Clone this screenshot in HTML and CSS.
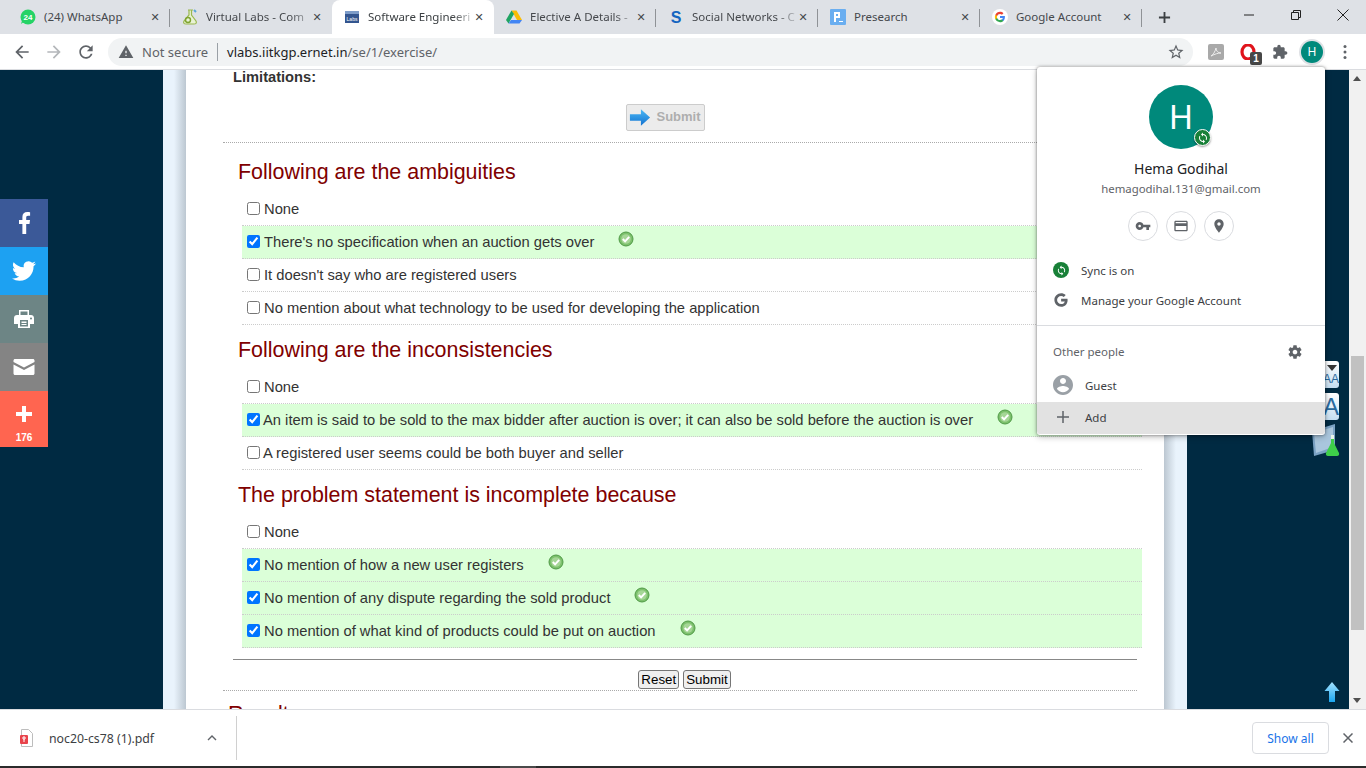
FILE: index.html
```html
<!DOCTYPE html>
<html lang="en">
<head>
  <meta charset="UTF-8" />
  <title>Software Engineering</title>
  <link rel="stylesheet" href="styles.css">
</head>
<body>
  <div class="tabstrip">
    <div class="tab sep">
      <svg class="fav" viewBox="0 0 16 16"><circle cx="8" cy="8" r="7.5" fill="#25d366"/><path d="M1 15l1.2-4h4z" fill="#25d366"/><text x="8" y="11" class="fav-num">24</text></svg>
      <span class="tab-title">(24) WhatsApp</span><span class="tab-x">✕</span>
    </div>
    <div class="tab">
      <svg class="fav" viewBox="0 0 16 16"><path d="M6 1h5M7 1v5L2 12c-1 2 0 3 2 3h8c2 0 3-1 2-3L9.5 6V1" fill="#e9f3d5" stroke="#9ab84f" stroke-width="1.2"/><circle cx="6" cy="11" r="2.5" fill="none" stroke="#7fa331" stroke-width="1.4"/><path d="M12 1l2 2" stroke="#5aa7d8" stroke-width="2"/></svg>
      <span class="tab-title fade">Virtual Labs - Com</span><span class="tab-x">✕</span>
    </div>
    <div class="tab active">
      <svg class="fav" viewBox="0 0 16 16"><rect x="1" y="2" width="14" height="12" fill="#33558f"/><rect x="1" y="2" width="14" height="3" fill="#7d9cc9"/><text x="8" y="11.5" class="fav-labs">Labs</text></svg>
      <span class="tab-title fade">Software Engineeri</span><span class="tab-x">✕</span>
    </div>
    <div class="tab sep">
      <svg class="fav" viewBox="0 0 16 16"><path d="M5.5 1.5h5L16 11h-5z" fill="#fbbc04"/><path d="M5.5 1.5L0 11l2.5 3.5L8 5z" fill="#1fa463"/><path d="M2.5 14.5h11L16 11H5z" fill="#4285f4"/></svg>
      <span class="tab-title fade">Elective A Details -</span><span class="tab-x">✕</span>
    </div>
    <div class="tab sep">
      <svg class="fav" viewBox="0 0 16 16"><text x="8" y="14" class="fav-s">S</text></svg>
      <span class="tab-title fade">Social Networks - C</span><span class="tab-x">✕</span>
    </div>
    <div class="tab sep">
      <svg class="fav" viewBox="0 0 16 16"><rect width="16" height="16" rx="1" fill="#6aaef0"/><path d="M4 3h6v6H6v4H4zM6 5v2h2V5zM9 12h4v1H9z" fill="#fff"/></svg>
      <span class="tab-title">Presearch</span><span class="tab-x">✕</span>
    </div>
    <div class="tab sep">
      <svg class="fav" viewBox="0 0 24 24"><circle cx="12" cy="12" r="12" fill="#fff"/><g transform="translate(3.6 3.6) scale(.7)"><path fill="#4285F4" d="M22.56 12.25c0-.78-.07-1.53-.2-2.25H12v4.26h5.92c-.26 1.37-1.04 2.53-2.21 3.31v2.77h3.57c2.08-1.92 3.28-4.74 3.28-8.09z"/><path fill="#34A853" d="M12 23c2.97 0 5.46-.98 7.28-2.66l-3.57-2.77c-.98.66-2.23 1.06-3.71 1.06-2.86 0-5.29-1.93-6.16-4.53H2.18v2.84C3.99 20.53 7.7 23 12 23z"/><path fill="#FBBC05" d="M5.84 14.09c-.22-.66-.35-1.36-.35-2.09s.13-1.43.35-2.09V7.07H2.18C1.43 8.55 1 10.22 1 12s.43 3.45 1.18 4.93l3.66-2.84z"/><path fill="#EA4335" d="M12 5.38c1.62 0 3.06.56 4.21 1.64l3.15-3.15C17.45 2.09 14.97 1 12 1 7.7 1 3.99 3.47 2.18 7.07l3.66 2.84c.87-2.6 3.3-4.53 6.16-4.53z"/></g></svg>
      <span class="tab-title">Google Account</span><span class="tab-x">✕</span>
    </div>
    <svg class="newtab" viewBox="0 0 14 14"><path d="M6 1h2v5h5v2H8v5H6V8H1V6h5z" fill="#3c4043"/></svg>
    <div class="winctl">
      <svg viewBox="0 0 12 12"><path d="M1 6h10" stroke="#222" fill="none"/></svg>
      <svg viewBox="0 0 12 12"><path d="M1.5 3.5h7v7h-7zM3.5 3.5v-2h7v7h-2" stroke="#222" fill="none"/></svg>
      <svg viewBox="0 0 12 12"><path d="M.5.5l11 11M11.5.5l-11 11" stroke="#222" fill="none"/></svg>
    </div>
  </div>

  <div class="toolbar">
    <svg class="tool-ic" viewBox="0 0 24 24"><path fill="#5f6368" d="M20 11H7.83l5.59-5.59L12 4l-8 8 8 8 1.41-1.41L7.83 13H20v-2z"/></svg>
    <svg class="tool-ic" viewBox="0 0 24 24"><path fill="#b4b7ba" d="M12 4l-1.41 1.41L16.17 11H4v2h12.17l-5.58 5.59L12 20l8-8z"/></svg>
    <svg class="tool-ic" viewBox="0 0 24 24"><path fill="#5f6368" d="M17.65 6.35C16.2 4.9 14.21 4 12 4c-4.42 0-7.99 3.58-7.99 8s3.57 8 7.99 8c3.73 0 6.84-2.55 7.73-6h-2.08c-.82 2.33-3.04 4-5.65 4-3.31 0-6-2.69-6-6s2.69-6 6-6c1.66 0 3.14.69 4.22 1.78L13 11h7V4l-2.35 2.35z"/></svg>
    <div class="omnibox">
      <svg class="warn" viewBox="0 0 24 24"><path fill="#5f6368" d="M1 21h22L12 2 1 21zm12-3h-2v-2h2v2zm0-4h-2v-4h2v4z"/></svg>
      <span class="not-secure">Not secure</span>
      <span class="omni-sep"></span>
      <span class="url">vlabs.iitkgp.ernet.in<span class="url-path">/se/1/exercise/</span></span>
      <svg class="star" viewBox="0 0 24 24"><path fill="#5f6368" d="M22 9.24l-7.19-.62L12 2 9.19 8.63 2 9.24l5.46 4.73L5.82 21 12 17.27 18.18 21l-1.63-7.03L22 9.24zM12 15.4l-3.76 2.27 1-4.28-3.32-2.88 4.38-.38L12 6.1l1.71 4.04 4.38.38-3.32 2.88 1 4.28L12 15.4z"/></svg>
    </div>
    <div class="ext-row">
      <svg class="ext" viewBox="0 0 16 16"><rect width="16" height="16" rx="2" fill="#a9a9a9"/><path d="M3 12c2-1 4-4 5-8 0 3 2 5 5 5-3 0-6 1-10 3z" fill="none" stroke="#eee" stroke-width="1"/></svg>
      <span class="ext-opera">
        <svg class="ext" viewBox="0 0 16 16"><ellipse cx="8" cy="8" rx="6" ry="7" fill="none" stroke="#e0141c" stroke-width="3.2"/></svg>
        <span class="ext-badge">1</span>
      </span>
      <svg class="ext" viewBox="0 0 24 24"><path fill="#5f6368" d="M20.5 11H19V7c0-1.1-.9-2-2-2h-4V3.5C13 2.12 11.88 1 10.5 1S8 2.12 8 3.5V5H4c-1.1 0-1.99.9-1.99 2v3.8H3.5c1.49 0 2.7 1.21 2.7 2.7s-1.21 2.7-2.7 2.7H2V20c0 1.1.9 2 2 2h3.8v-1.5c0-1.49 1.21-2.7 2.7-2.7 1.49 0 2.7 1.21 2.7 2.7V22H17c1.1 0 2-.9 2-2v-4h1.5c1.38 0 2.5-1.12 2.5-2.5S21.88 11 20.5 11z"/></svg>
      <span class="me-ring"><span class="me">H</span></span>
      <svg class="kebab" viewBox="0 0 4 16"><circle cx="2" cy="2.5" r="1.5" fill="#5f6368"/><circle cx="2" cy="8" r="1.5" fill="#5f6368"/><circle cx="2" cy="13.5" r="1.5" fill="#5f6368"/></svg>
    </div>
  </div>

  <div class="viewport">
    <div class="page">
      <div class="sheet">
        <div class="content">
          <div class="limits">Limitations:</div>
          <div class="submit-wrap">
            <div class="submit-off">
              <svg viewBox="0 0 24 20"><defs><linearGradient id="arr" x1="0" y1="0" x2="0" y2="1"><stop offset="0" stop-color="#4cb8f5"/><stop offset="1" stop-color="#1272d0"/></linearGradient></defs><path d="M1 6.5h12V1l10 9-10 9v-5.5H1z" fill="url(#arr)"/></svg>
              <span class="submit-label">Submit</span>
            </div>
          </div>

          <h3 class="q-title">Following are the ambiguities</h3>
          <label class="opt"><input type="checkbox">None</label>
          <label class="opt ok"><input type="checkbox" checked>There's no specification when an auction gets over<svg class="tick" viewBox="0 0 16 16"><use href="#tick"/></svg></label>
          <label class="opt"><input type="checkbox">It doesn't say who are registered users</label>
          <label class="opt"><input type="checkbox">No mention about what technology to be used for developing the application</label>

          <h3 class="q-title">Following are the inconsistencies</h3>
          <label class="opt"><input type="checkbox">None</label>
          <label class="opt ok tight"><input type="checkbox" checked>An item is said to be sold to the max bidder after auction is over; it can also be sold before the auction is over<svg class="tick" viewBox="0 0 16 16"><use href="#tick"/></svg></label>
          <label class="opt tight"><input type="checkbox">A registered user seems could be both buyer and seller</label>

          <h3 class="q-title">The problem statement is incomplete because</h3>
          <label class="opt"><input type="checkbox">None</label>
          <label class="opt ok"><input type="checkbox" checked>No mention of how a new user registers<svg class="tick" viewBox="0 0 16 16"><use href="#tick"/></svg></label>
          <label class="opt ok"><input type="checkbox" checked>No mention of any dispute regarding the sold product<svg class="tick" viewBox="0 0 16 16"><use href="#tick"/></svg></label>
          <label class="opt ok"><input type="checkbox" checked>No mention of what kind of products could be put on auction<svg class="tick" viewBox="0 0 16 16"><use href="#tick"/></svg></label>

          <hr class="rule">
          <div class="actions">
            <button type="button">Reset</button>
            <button type="button">Submit</button>
          </div>
          <h2 class="results">Result</h2>
        </div>
      </div>
    </div>
    <div class="scrollbar">
      <span class="sb-up"></span>
      <span class="sb-thumb"></span>
      <span class="sb-down"></span>
    </div>

    <!-- floating things over the page -->
    <div class="social">
      <div class="soc soc-fb"><svg viewBox="0 0 24 24"><path fill="#fff" d="M14.2 23V13h3.3l.5-3.9h-3.800V6.700c0-1.100.3-1.900 1.900-1.900h2V1.300C17.800 1.200 16.600 1 15.300 1c-2.900 0-4.900 1.800-4.900 5v3.100H7V13h3.400v10z"/></svg></div>
      <div class="soc soc-tw"><svg viewBox="0 0 24 24"><path fill="#fff" d="M23.953 4.57a10 10 0 01-2.825.775 4.958 4.958 0 002.163-2.723c-.951.555-2.005.959-3.127 1.184a4.92 4.92 0 00-8.384 4.482C7.69 8.095 4.067 6.13 1.64 3.162a4.822 4.822 0 00-.666 2.475c0 1.71.87 3.213 2.188 4.096a4.904 4.904 0 01-2.228-.616v.06a4.923 4.923 0 003.946 4.827 4.996 4.996 0 01-2.212.085 4.936 4.936 0 004.604 3.417 9.867 9.867 0 01-6.102 2.105c-.39 0-.779-.023-1.17-.067a13.995 13.995 0 007.557 2.209c9.053 0 13.998-7.496 13.998-13.985 0-.21 0-.42-.015-.63A9.935 9.935 0 0024 4.59z"/></svg></div>
      <div class="soc soc-pr"><svg viewBox="0 0 24 24"><path fill="#fff" fill-rule="evenodd" d="M7 3h10v5h2c1.7 0 3 1.3 3 3v6h-4v4H6v-4H2v-6c0-1.7 1.3-3 3-3h2zm1.500 1.500V8h7V4.500zM8 13v6.500h8V13zm1.500 1.500h5V16h-5zm0 2.500h5v1h-5zM19 10.500a1 1 0 100 2 1 1 0 000-2z"/></svg></div>
      <div class="soc soc-ml"><svg viewBox="0 0 24 24"><path fill="#fff" d="M21 4H3c-.8 0-1.500.7-1.500 1.500V7L12 12.500 22.500 7V5.500C22.500 4.700 21.800 4 21 4zM1.500 9.500v9c0 .8.7 1.500 1.500 1.500h18c.8 0 1.500-.7 1.500-1.500v-9L12 15z"/></svg></div>
      <div class="soc soc-more">
        <svg viewBox="0 0 16 16"><path fill="#fff" d="M6 0h4v6h6v4h-6v6H6v-6H0V6h6z"/></svg>
        <span class="soc-count">176</span>
      </div>
    </div>

    <div class="side-tools">
      <div class="fontbtn small">AA</div>
      <div class="fontbtn">A</div>
      <svg class="flask" viewBox="0 0 30 34"><path d="M1 8l23-7v26L3 33z" fill="#7aa2c4"/><path d="M3 10l19-6v20L5 30z" fill="#a9c6dd"/><path d="M20 14h3v6l5 10c.5 2-.5 3-2 3h-9c-1.500 0-2.500-1-2-3l5-10z" fill="#3ecf4a"/><path d="M20 12h3v4h-3z" fill="#e8f4ea"/></svg>
    </div>

    <svg class="to-top" viewBox="0 0 16 22"><defs><linearGradient id="up" x1="0" y1="0" x2="0" y2="1"><stop offset="0" stop-color="#a5e3ff"/><stop offset="1" stop-color="#1aa6f0"/></linearGradient></defs><path d="M8 1l7.500 9H11v11H5V10H.5z" fill="url(#up)"/></svg>
  </div>

  <div class="downloads">
    <div class="dl-item">
      <svg class="dl-file" viewBox="0 0 14 18"><path d="M1.500.5h7l4 4v13h-11z" fill="#fff" stroke="#bdbdbd"/><rect y="6" x="0" width="8" height="9" rx="1" fill="#e8434b"/><path d="M3 8h2v2H3zM4 10v3" stroke="#fff" fill="none"/></svg>
      <span class="dl-name">noc20-cs78 (1).pdf</span>
      <svg class="dl-caret" viewBox="0 0 10 6"><path d="M1 5l4-4 4 4" fill="none" stroke="#5f6368" stroke-width="1.4"/></svg>
    </div>
    <span class="dl-sep"></span>
    <button class="show-all" type="button">Show all</button>
    <svg class="dl-close" viewBox="0 0 10 10"><path d="M.5.5l9 9M9.500.5l-9 9" stroke="#5f6368" stroke-width="1.5" fill="none"/></svg>
  </div>
  <div class="taskbar"><span class="task-on"></span></div>

  <!-- profile menu -->
  <div class="profile">
    <div class="profile-top">
      <div class="big-avatar">H
        <span class="sync-badge"><svg viewBox="0 0 24 24"><use href="#sync"/></svg></span>
      </div>
      <div class="p-name">Hema Godihal</div>
      <div class="p-mail">hemagodihal.131@gmail.com</div>
      <div class="p-round">
        <span class="round"><svg viewBox="0 0 24 24"><path fill="#5f6368" d="M12.65 10C11.83 7.67 9.61 6 7 6c-3.31 0-6 2.69-6 6s2.69 6 6 6c2.61 0 4.83-1.67 5.65-4H17v4h4v-4h2v-4H12.65zM7 14c-1.1 0-2-.9-2-2s.9-2 2-2 2 .9 2 2-.9 2-2 2z"/></svg></span>
        <span class="round"><svg viewBox="0 0 24 24"><path fill="#5f6368" d="M20 4H4c-1.11 0-1.99.89-1.99 2L2 18c0 1.11.89 2 2 2h16c1.11 0 2-.89 2-2V6c0-1.11-.89-2-2-2zm0 14H4v-6h16v6zm0-10H4V6h16v2z"/></svg></span>
        <span class="round"><svg viewBox="0 0 24 24"><path fill="#5f6368" d="M12 2C8.13 2 5 5.13 5 9c0 5.25 7 13 7 13s7-7.75 7-13c0-3.87-3.13-7-7-7zm0 9.5c-1.38 0-2.5-1.12-2.5-2.5s1.12-2.5 2.5-2.5 2.5 1.12 2.5 2.5-1.12 2.5-2.5 2.5z"/></svg></span>
      </div>
    </div>
    <div class="p-links">
      <div class="p-row"><span class="sync-dot"><svg viewBox="0 0 24 24"><use href="#sync"/></svg></span>Sync is on</div>
      <div class="p-row"><svg class="p-g" viewBox="0 0 24 24"><path fill="#5f6368" d="M12.2 10.2v3.900h5.500c-.5 2.400-2.600 4-5.500 4-3.400 0-6.100-2.800-6.100-6.100s2.700-6.100 6.100-6.100c1.500 0 2.900.5 4 1.500l2.900-2.900C16.900 2.800 14.700 2 12.200 2 6.600 2 2.100 6.500 2.100 12s4.500 10 10.100 10c5.800 0 9.700-4.100 9.700-9.800 0-.7-.1-1.400-.2-2z"/></svg>Manage your Google Account</div>
    </div>
    <div class="p-others">
      <div class="p-head">Other people
        <svg viewBox="0 0 24 24"><path fill="#5f6368" d="M19.43 12.98c.04-.32.07-.64.07-.98s-.03-.66-.07-.98l2.11-1.65c.19-.15.24-.42.12-.64l-2-3.46c-.12-.22-.39-.3-.61-.22l-2.49 1c-.52-.4-1.08-.73-1.69-.98l-.38-2.65C14.46 2.18 14.25 2 14 2h-4c-.25 0-.46.18-.49.42l-.38 2.65c-.61.25-1.17.59-1.69.98l-2.49-1c-.23-.09-.49 0-.61.22l-2 3.46c-.13.22-.07.49.12.64l2.11 1.65c-.04.32-.07.65-.07.98s.03.66.07.98l-2.11 1.65c-.19.15-.24.42-.12.64l2 3.46c.12.22.39.3.61.22l2.49-1c.52.4 1.08.73 1.69.98l.38 2.65c.03.24.24.42.49.42h4c.25 0 .46-.18.49-.42l.38-2.65c.61-.25 1.17-.59 1.69-.98l2.49 1c.23.09.49 0 .61-.22l2-3.46c.12-.22.07-.49-.12-.64l-2.11-1.65zM12 15.5c-1.93 0-3.5-1.57-3.5-3.5s1.57-3.5 3.5-3.5 3.5 1.57 3.5 3.5-1.57 3.5-3.5 3.5z"/></svg>
      </div>
      <div class="p-person p-guest-row"><svg class="p-guest" viewBox="2 2 20 20"><path fill="#9aa0a6" d="M12 2C6.48 2 2 6.48 2 12s4.48 10 10 10 10-4.48 10-10S17.52 2 12 2zm0 3c1.66 0 3 1.34 3 3s-1.34 3-3 3-3-1.34-3-3 1.34-3 3-3zm0 14.2c-2.5 0-4.71-1.28-6-3.22.03-1.99 4-3.08 6-3.08 1.99 0 5.97 1.09 6 3.08-1.29 1.94-3.5 3.22-6 3.22z"/></svg>Guest</div>
      <div class="p-person p-add"><svg class="p-plus" viewBox="0 0 12 12"><path d="M5.25 0h1.5v5.25H12v1.5H6.75V12h-1.5V6.75H0v-1.5h5.25z" fill="#5f6368"/></svg>Add</div>
    </div>
  </div>

  <svg class="defs" width="0" height="0">
    <symbol id="tick" viewBox="0 0 16 16">
      <circle cx="8" cy="8" r="7" fill="#7cc06c" stroke="#4f9a45"/>
      <circle cx="8" cy="8" r="4.8" fill="#a5d696"/>
      <path d="M4.800 8l2.300 2.400 4.100-4.500" fill="none" stroke="#fff" stroke-width="2"/>
    </symbol>
    <symbol id="sync" viewBox="0 0 24 24">
      <path fill="#fff" d="M12 4V1L8 5l4 4V6c3.31 0 6 2.69 6 6 0 1.01-.25 1.97-.7 2.8l1.46 1.46C19.54 15.03 20 13.57 20 12c0-4.42-3.58-8-8-8zm0 14c-3.31 0-6-2.69-6-6 0-1.01.25-1.97.7-2.8L5.24 7.74C4.46 8.97 4 10.43 4 12c0 4.42 3.58 8 8 8v3l4-4-4-4v3z"/>
    </symbol>
  </svg>
</body>
</html>
```

FILE: styles.css
```css
* {
  box-sizing: border-box;
}
html, body {
  height: 100%;
}
body {
  margin: 0;
  height: 768px;
  overflow: hidden;
  position: relative;
  background: #fff;
  font-family: "Liberation Sans", Arial, sans-serif;
}

/* tab strip */
.tabstrip {
  height: 34px;
  background: #dee1e6;
  padding-left: 8px;
  display: flex;
  align-items: center;
}
.tab {
  width: 162px;
  height: 34px;
  flex: none;
  display: flex;
  align-items: center;
  padding: 0 7px 0 12px;
  position: relative;
  font-family: "Noto Sans", sans-serif;
  font-size: 11.5px;
  color: #45484c;
}
.tab.sep::after {
  content: "";
  position: absolute;
  right: 0;
  top: 9px;
  height: 18px;
  width: 1px;
  background: #8f9296;
}
.tab.active {
  background: #fff;
  border-radius: 8px 8px 0 0;
  color: #3c4043;
}
.fav {
  width: 16px;
  height: 16px;
  flex: none;
  margin-right: 8px;
}
.fav-num {
  font: bold 8px "Liberation Sans", sans-serif;
  fill: #fff;
  text-anchor: middle;
}
.fav-labs {
  font: 5px "Liberation Sans", sans-serif;
  fill: #fff;
  text-anchor: middle;
}
.fav-s {
  font: bold 16px "Liberation Sans", sans-serif;
  fill: #1565c0;
  text-anchor: middle;
}
.tab-title {
  flex: 1;
  min-width: 0;
  margin-top: -1px;
  white-space: nowrap;
  overflow: hidden;
}
.tab-title.fade {
  -webkit-mask-image: linear-gradient(to right, #000 82%, rgba(0, 0, 0, .25));
  mask-image: linear-gradient(to right, #000 82%, rgba(0, 0, 0, .25));
}
.tab-x {
  width: 16px;
  flex: none;
  text-align: center;
  font: bold 11px "DejaVu Sans", sans-serif;
  color: #45484c;
}
.newtab {
  width: 13px;
  height: 13px;
  margin-left: 16px;
}
.winctl {
  margin-left: auto;
  margin-right: 17px;
  margin-top: -4px;
  display: flex;
  gap: 35px;
}
.winctl svg {
  width: 12px;
  height: 12px;
}

/* toolbar */
.toolbar {
  height: 36px;
  background: #fff;
  display: flex;
  align-items: center;
  padding-left: 12px;
  gap: 12px;
  border-bottom: 1px solid #dadce0;
}
.tool-ic {
  width: 20px;
  height: 20px;
  flex: none;
}
.omnibox {
  width: 1085px;
  height: 28px;
  background: #f1f3f4;
  border-radius: 14px;
  display: flex;
  align-items: center;
  padding-left: 10px;
  font-family: "Noto Sans", sans-serif;
  font-size: 13px;
}
.warn {
  width: 16px;
  height: 16px;
  margin-right: 8px;
}
.not-secure {
  color: #5f6368;
}
.omni-sep {
  width: 1px;
  height: 18px;
  background: #9aa0a6;
  margin: 0 9px;
}
.url {
  color: #202124;
}
.url-path {
  color: #5f6368;
}
.star {
  width: 18px;
  height: 18px;
  margin-left: auto;
  margin-right: 8px;
}
.ext-row {
  display: flex;
  align-items: center;
  margin-left: 3px;
}
.ext {
  width: 16px;
  height: 16px;
  flex: none;
  display: block;
}
.ext-opera {
  position: relative;
  margin: 0 16px;
}
.ext-badge {
  position: absolute;
  left: 10px;
  top: 8px;
  width: 12px;
  height: 13px;
  border-radius: 2px;
  background: #474747;
  color: #fff;
  font: bold 10px/13px "Liberation Sans", sans-serif;
  text-align: center;
}
.me-ring {
  width: 26px;
  height: 26px;
  border-radius: 50%;
  background: #dfe1e5;
  margin-left: 11px;
  display: flex;
  align-items: center;
  justify-content: center;
}
.me {
  width: 22px;
  height: 22px;
  border-radius: 50%;
  background: #00897b;
  color: #fff;
  font: 12px/22px "Noto Sans", sans-serif;
  text-align: center;
}
.kebab {
  width: 4px;
  height: 16px;
  margin-left: 18px;
}

/* page */
.viewport {
  height: 639px;
  display: flex;
  position: relative;
  overflow: hidden;
}
.page {
  flex: 1;
  min-width: 0;
  background: #002a42;
  overflow: hidden;
}
.sheet {
  margin-left: 163px;
  width: 1024px;
  height: 100%;
  padding: 0 23px;
  background: linear-gradient(to right, #e9f3fc 0, #e9f3fc 11px, #bcc7d1 23px, #bcc7d1 1001px, #e9f3fc 1013px, #e9f3fc 100%);
}
.content {
  background: #fff;
  height: 100%;
  padding: 0 27px 0 37px;
  color: #333;
  font-size: 14.74px;
}
.limits {
  font-weight: bold;
  font-size: 14.67px;
  line-height: 14px;
  height: 12px;
  margin-left: 10px;
}
.submit-wrap {
  margin-top: 22px;
  padding: 0 30px 11px 0;
  border-bottom: 1px dotted #aaa;
  height: 39px;
  display: flex;
  justify-content: center;
}
.submit-off {
  width: 79px;
  height: 27px;
  background: #ececec;
  border: 1px solid #ccc;
  border-radius: 2px;
  display: flex;
  align-items: center;
  gap: 6px;
  padding-left: 2px;
  color: #aeaeae;
  font-weight: bold;
  font-size: 13px;
  white-space: nowrap;
}
.submit-off svg {
  width: 22px;
  height: 19px;
  flex: none;
}
.submit-label {
  margin-top: -2px;
}
.q-title {
  margin: 14px 0 6px 15px;
  height: 30px;
  font-size: 21.44px;
  line-height: 30px;
  font-weight: normal;
  color: #800000;
}
.opt + .q-title {
  margin-top: 10px;
}
.opt {
  display: flex;
  align-items: center;
  height: 33px;
  margin: 0 -5px 0 19px;
  padding-left: 5px;
  border-bottom: 1px dotted #ccc;
  white-space: nowrap;
}
.opt input {
  margin: -2px 4px 0 0;
  width: 13px;
  height: 13px;
  flex: none;
}
.opt.tight input {
  margin-right: 3px;
}
.opt.ok {
  background: #dbffd8;
}
.tick {
  width: 16px;
  height: 16px;
  margin: -6px 0 0 24px;
}
.rule {
  margin: 11px 0 0 10px;
  border: 0;
  border-top: 1px solid #888;
  height: 1px;
}
.actions {
  margin-top: 10px;
  padding: 0 0 1px 9px;
  height: 21px;
  border-bottom: 1px dotted #aaa;
  display: flex;
  justify-content: center;
  gap: 4px;
}
.actions button {
  height: 19px;
  padding: 0 2px;
  background: #efefef;
  border: 1px solid #767676;
  border-radius: 3px;
  color: #000;
  font: 13.33px "Liberation Sans", sans-serif;
}
.results {
  margin: 8px 0 0 5px;
  font-size: 21.44px;
  line-height: 30px;
  font-weight: normal;
  color: #800000;
}

/* scrollbar */
.scrollbar {
  width: 17px;
  flex: none;
  background: #f1f1f1;
  position: relative;
}
.sb-up, .sb-down {
  position: absolute;
  left: 4px;
  width: 0;
  height: 0;
  border-left: 4px solid transparent;
  border-right: 4px solid transparent;
}
.sb-up {
  top: 6px;
  border-bottom: 5px solid #505050;
}
.sb-down {
  bottom: 6px;
  border-top: 5px solid #505050;
}
.sb-thumb {
  position: absolute;
  left: 2px;
  top: 286px;
  width: 13px;
  height: 274px;
  background: #c1c1c1;
}

/* share bar */
.social {
  position: absolute;
  left: 0;
  top: 129px;
  width: 48px;
}
.soc {
  height: 48px;
  display: flex;
  flex-direction: column;
  align-items: center;
  justify-content: center;
}
.soc svg {
  width: 24px;
  height: 24px;
}
.soc-fb {
  background: #3b5998;
}
.soc-tw {
  background: #1da1f2;
}
.soc-pr {
  background: #6d8585;
}
.soc-ml {
  background: #848484;
}
.soc-more {
  height: 56px;
  background: #ff6550;
  justify-content: flex-start;
  padding-top: 15px;
}
.soc-more svg {
  width: 16px;
  height: 16px;
}
.soc-count {
  margin-top: 10px;
  color: #fff;
  font-size: 10px;
  font-weight: bold;
  line-height: 12px;
}

.side-tools {
  position: absolute;
  left: 1311px;
  top: 291px;
  width: 30px;
}
.fontbtn {
  height: 27px;
  margin-bottom: 5px;
  width: 28px;
  background: linear-gradient(#fff, #c6dff2);
  border-radius: 3px;
  color: #2a6a9e;
  font-size: 24px;
  line-height: 27px;
  text-align: right;
  position: relative;
}
.fontbtn.small {
  font-size: 12px;
  line-height: 36px;
}
.fontbtn.small::before {
  content: "";
  position: absolute;
  right: 2px;
  top: 4px;
  border-left: 5px solid transparent;
  border-right: 5px solid transparent;
  border-top: 6px solid #333;
}
.flask {
  display: block;
  width: 30px;
  height: 34px;
  margin-top: -2px;
}
.to-top {
  position: absolute;
  left: 1324px;
  top: 611px;
  width: 16px;
  height: 22px;
}

/* download shelf */
.downloads {
  height: 57px;
  border-top: 1px solid #dadce0;
  background: #fff;
  display: flex;
  align-items: center;
  font-family: "Noto Sans", sans-serif;
  font-size: 12.3px;
}
.dl-item {
  width: 236px;
  padding-left: 20px;
  display: flex;
  align-items: center;
  flex: none;
}
.dl-file {
  width: 14px;
  height: 18px;
  margin-right: 15px;
}
.dl-name {
  color: #3c4043;
}
.dl-caret {
  width: 10px;
  height: 6px;
  margin-left: auto;
  margin-right: 19px;
}
.dl-sep {
  width: 1px;
  height: 44px;
  background: #d0d0d0;
}
.show-all {
  margin-left: auto;
  width: 77px;
  height: 32px;
  background: #fff;
  border: 1px solid #dadce0;
  border-radius: 4px;
  color: #1a73e8;
  font: 12px "Noto Sans", sans-serif;
}
.dl-close {
  width: 10px;
  height: 10px;
  margin: 0 13px 0 14px;
}
.taskbar {
  height: 2px;
  background: #2b2b2b;
  padding-left: 500px;
}
.task-on {
  display: block;
  width: 36px;
  height: 2px;
  background: #4a4a4a;
}

/* profile menu */
.profile {
  position: absolute;
  left: 1037px;
  top: 67px;
  width: 288px;
  height: 368px;
  background: #fff;
  border-radius: 3px;
  box-shadow: 0 0 3px rgba(0, 0, 0, .45), 0 2px 6px rgba(0, 0, 0, .25);
  font-family: "Noto Sans", sans-serif;
  font-size: 12px;
  color: #3c4043;
}
.profile-top {
  padding-top: 18px;
  height: 188px;
  display: flex;
  flex-direction: column;
  align-items: center;
}
.big-avatar {
  width: 64px;
  height: 64px;
  flex: none;
  border-radius: 50%;
  background: #00897b;
  color: #fff;
  font-size: 33px;
  line-height: 64px;
  text-align: center;
  position: relative;
}
.sync-badge {
  position: absolute;
  right: 2px;
  bottom: 3px;
  width: 17px;
  height: 17px;
  border-radius: 50%;
  background: #188038;
  border: 1px solid #fff;
  box-shadow: 0 1px 2px rgba(0, 0, 0, .4);
  display: flex;
  align-items: center;
  justify-content: center;
}
.sync-badge svg {
  width: 12px;
  height: 12px;
}
.p-name {
  margin-top: 10px;
  font-size: 14px;
  line-height: 20px;
  color: #202124;
}
.p-mail {
  font-size: 11.4px;
  line-height: 20px;
  color: #5f6368;
}
.p-round {
  margin-top: 12px;
  display: flex;
  gap: 8px;
}
.round {
  width: 30px;
  height: 30px;
  border: 1px solid #dadce0;
  border-radius: 50%;
  display: flex;
  align-items: center;
  justify-content: center;
}
.round svg {
  width: 16px;
  height: 16px;
}
.p-links {
  height: 71px;
  padding: 0 16px;
  border-bottom: 1px solid #dadce0;
}
.p-row {
  height: 30px;
  display: flex;
  align-items: center;
  font-size: 11.5px;
}
.sync-dot {
  width: 16px;
  height: 16px;
  margin-right: 12px;
  border-radius: 50%;
  background: #188038;
  display: flex;
  align-items: center;
  justify-content: center;
}
.sync-dot svg {
  width: 11px;
  height: 11px;
}
.p-g {
  width: 16px;
  height: 16px;
  margin-right: 12px;
}
.p-others {
  padding-top: 9px;
}
.p-head {
  height: 33px;
  padding: 0 22px 0 16px;
  display: flex;
  align-items: center;
  justify-content: space-between;
  color: #5f6368;
  font-size: 11.5px;
}
.p-head svg {
  width: 16px;
  height: 16px;
}
.p-person {
  height: 33px;
  padding-left: 16px;
  display: flex;
  align-items: center;
  font-size: 11.5px;
}
.p-guest-row {
  height: 34px;
}
.p-guest {
  width: 20px;
  height: 20px;
  margin-right: 12px;
}
.p-add {
  height: 32px;
  padding-bottom: 2px;
  background: #e2e2e2;
  border-radius: 0 0 3px 3px;
}
.p-plus {
  width: 12px;
  height: 12px;
  margin: 0 16px 0 4px;
}
.defs {
  position: absolute;
}
```
